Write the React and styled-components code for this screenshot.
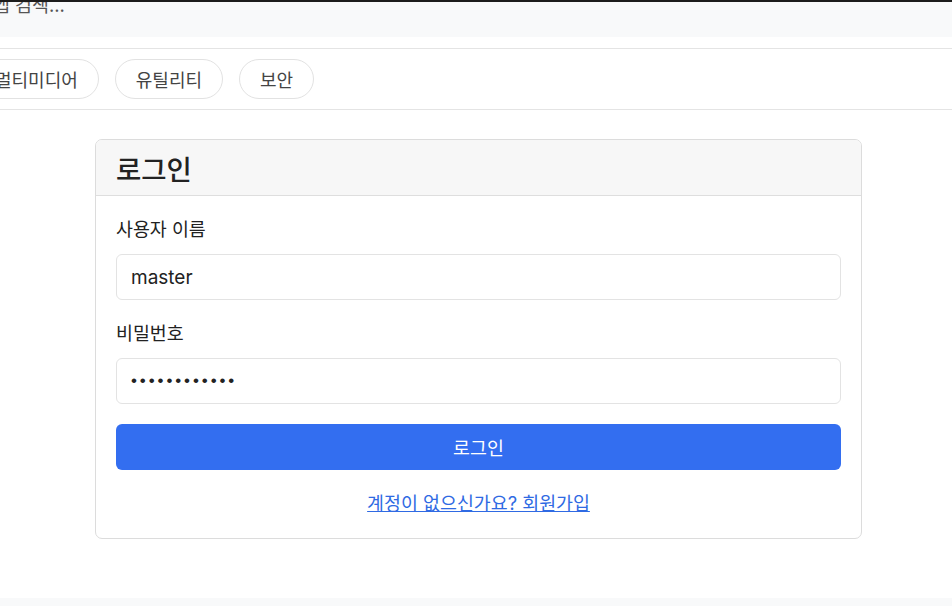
import React from 'react';
import styled, { createGlobalStyle } from 'styled-components';

const GlobalStyle = createGlobalStyle`
    html, body {
        margin: 0;
        padding: 0;
        background: #ffffff;
    }
    body {
        font-family: Inter, "Noto Sans CJK KR", "Noto Sans", sans-serif;
        color: #222222;
        overflow: hidden;
    }
    * {
        box-sizing: border-box;
    }
`;

const categories = ['멀티미디어', '유틸리티', '보안'];

const App = () => {
    return (
        <>
            <GlobalStyle />
            <Viewport>
                <TopBar />
                <ScrollArea>
                    <SearchWrap>
                        <SearchField>앱 검색...</SearchField>
                    </SearchWrap>
                    <CategoryBar>
                        <PillList>
                            {categories.map(name => (
                                <Pill key={name}>{name}</Pill>
                            ))}
                        </PillList>
                    </CategoryBar>
                    <Main>
                        <Card>
                            <CardHeader>
                                <Title>로그인</Title>
                            </CardHeader>
                            <CardBody>
                                <Field>
                                    <Label htmlFor="username">사용자 이름</Label>
                                    <Input id="username" type="text" defaultValue="master" />
                                </Field>
                                <Field>
                                    <Label htmlFor="password">비밀번호</Label>
                                    <Input id="password" type="password" defaultValue="masterpasswd" masked />
                                </Field>
                                <SubmitButton type="button">로그인</SubmitButton>
                                <SignupLine>
                                    <SignupLink href="#signup">계정이 없으신가요? 회원가입</SignupLink>
                                </SignupLine>
                            </CardBody>
                        </Card>
                    </Main>
                    <Footer />
                </ScrollArea>
            </Viewport>
        </>
    );
}

const Viewport = styled.div`
    height: 606px;
    display: flex;
    flex-direction: column;
    overflow: hidden;
`;

const TopBar = styled.header`
    height: 2px;
    flex: none;
    background: #1c1c1c;
`;

const ScrollArea = styled.div`
    flex: 1;
    overflow: hidden;
`;

const SearchWrap = styled.div`
    margin-top: -31px;
    padding-bottom: 11px;
    border-bottom: 1px solid #e4e4e4;
`;

const SearchField = styled.div`
    height: 66px;
    display: flex;
    align-items: center;
    margin-left: -20px;
    padding-left: 13px;
    background: #f8f9fa;
    font-size: 18.4px;
    color: #555555;
`;

const CategoryBar = styled.nav`
    padding: 10px 0;
    border-bottom: 1px solid #e4e4e4;
    overflow: hidden;
`;

const PillList = styled.div`
    display: flex;
    gap: 16px;
    margin-left: -26px;
`;

const Pill = styled.button`
    height: 40px;
    padding: 0 20px;
    border: 1px solid #e2e2e2;
    border-radius: 20px;
    background: #ffffff;
    font-family: inherit;
    font-size: 18px;
    color: #444444;
    white-space: nowrap;
`;

const Main = styled.main`
    padding: 29px 90px 59px 95px;
`;

const Card = styled.section`
    border: 1px solid #dcdcdc;
    border-radius: 7px;
    overflow: hidden;
    background: #ffffff;
`;

const CardHeader = styled.div`
    height: 56px;
    display: flex;
    align-items: center;
    padding: 0 20px;
    background: #f7f7f7;
    border-bottom: 1px solid #dedede;
`;

const Title = styled.h2`
    margin: 0;
    font-size: 27.5px;
    font-weight: 500;
    color: #222222;
`;

const CardBody = styled.div`
    display: flex;
    flex-direction: column;
    gap: 20px;
    padding: 20px 20px 21px;
`;

const Field = styled.div`
    display: flex;
    flex-direction: column;
    gap: 12px;
`;

const Label = styled.label`
    font-size: 18.4px;
    line-height: 26px;
    color: #222222;
`;

const Input = styled.input`
    height: 46px;
    padding: 0 14px;
    border: 1px solid #e3e3e3;
    border-radius: 6px;
    font-family: ${p => (p.masked ? '"Liberation Sans", Arial, sans-serif' : 'inherit')};
    font-size: ${p => (p.masked ? '17px' : '19px')};
    letter-spacing: ${p => (p.masked ? '2.9px' : 'normal')};
    color: #222222;
    outline: none;
`;

const SubmitButton = styled.button`
    height: 46px;
    border: none;
    border-radius: 6px;
    background: #336ef0;
    color: #ffffff;
    font-family: inherit;
    font-size: 18.4px;
`;

const SignupLine = styled.p`
    margin: 0;
    text-align: center;
    line-height: 26px;
`;

const SignupLink = styled.a`
    font-size: 18.4px;
    color: #2f6ae3;
    text-decoration: underline;
`;

const Footer = styled.footer`
    height: 60px;
    background: #f8f9fa;
`;

export default App;
